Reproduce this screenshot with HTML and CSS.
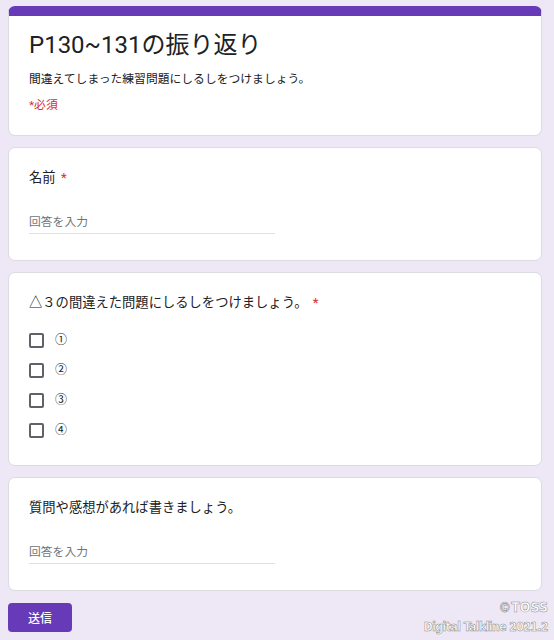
FILE: index.html
```html
<!DOCTYPE html>
<html lang="ja">
<head>
<meta charset="utf-8">
<title>P130~131の振り返り</title>
<link rel="stylesheet" href="styles.css">
</head>
<body>
<div class="page">
  <div class="card header-card">
    <h1 class="form-title">P130~131の振り返り</h1>
    <p class="form-desc">間違えてしまった練習問題にしるしをつけましょう。</p>
    <p class="required-note">*必須</p>
  </div>

  <div class="card">
    <div class="q-title">名前 <span class="star">*</span></div>
    <div class="text-input">回答を入力</div>
  </div>

  <div class="card choice-card">
    <div class="q-title">△３の間違えた問題にしるしをつけましょう。 <span class="star">*</span></div>
    <div class="options">
      <div class="option"><span class="box"></span><span class="opt-label">①</span></div>
      <div class="option"><span class="box"></span><span class="opt-label">②</span></div>
      <div class="option"><span class="box"></span><span class="opt-label">③</span></div>
      <div class="option"><span class="box"></span><span class="opt-label">④</span></div>
    </div>
  </div>

  <div class="card">
    <div class="q-title">質問や感想があれば書きましょう。</div>
    <div class="text-input">回答を入力</div>
  </div>

  <div class="actions">
    <button class="submit">送信</button>
  </div>
</div>
<div class="watermark">
  <div class="wm-line1">©TOSS</div>
  <div class="wm-line2">Digital Talkline 2021.2</div>
</div>
</body>
</html>
```
FILE: styles.css
```css
html, body {
  margin: 0;
  padding: 0;
}
body {
  background: #ede7f6;
  font-family: Roboto, "Noto Sans CJK JP", sans-serif;
  color: #202124;
  width: 554px;
  height: 640px;
  overflow: hidden;
  position: relative;
}
.page {
  width: 534px;
  margin-left: 8px;
  padding-top: 6px;
  display: flex;
  flex-direction: column;
  gap: 11px;
}
.card {
  background: #fff;
  border: 1px solid #dadce0;
  border-radius: 7px;
  padding: 20px 20px 26px;
  box-sizing: border-box;
}
.header-card {
  border-top: 10px solid #673ab7;
  padding: 13px 20px 20px;
  height: 130px;
}
.choice-card {
  padding-bottom: 20px;
}
.form-title {
  margin: 0;
  font-size: 24px;
  line-height: 32px;
  font-weight: 400;
}
.form-desc {
  margin: 10px 0 0;
  font-size: 11.8px;
  line-height: 17px;
}
.required-note {
  margin: 9px 0 0;
  font-size: 11.8px;
  line-height: 17px;
  color: #d93025;
}
.q-title {
  font-size: 13.3px;
  line-height: 20px;
}
.star {
  color: #d93025;
  margin-left: 2px;
}
.text-input {
  margin-top: 26px;
  width: 246px;
  font-size: 11.8px;
  line-height: 17px;
  color: #70757a;
  padding-bottom: 2px;
  border-bottom: 1px solid #e0e0e0;
}
.options {
  margin-top: 12px;
  display: flex;
  flex-direction: column;
}
.option {
  height: 30px;
  display: flex;
  align-items: center;
  gap: 11px;
}
.box {
  width: 15px;
  height: 15px;
  box-sizing: border-box;
  border: 2px solid #5f6368;
  border-radius: 2px;
}
.opt-label {
  font-size: 12px;
  line-height: 17px;
}
.actions {
  margin-top: 1px;
}
.submit {
  width: 64px;
  height: 29px;
  background: #673ab7;
  color: #fff;
  border: none;
  border-radius: 4px;
  font-family: Roboto, "Noto Sans CJK JP", sans-serif;
  font-size: 12px;
  font-weight: 500;
  padding: 0;
}
.watermark {
  position: absolute;
  right: 6px;
  top: 597px;
  text-align: right;
  color: #fff;
  font-family: "DejaVu Sans Condensed", "DejaVu Sans", sans-serif;
  font-weight: bold;
  -webkit-text-stroke: 0.5px #8a8a8a;
  line-height: 20px;
}
.wm-line1 {
  font-size: 14px;
}
.wm-line2 {
  font-size: 12px;
  letter-spacing: -0.5px;
}
```
